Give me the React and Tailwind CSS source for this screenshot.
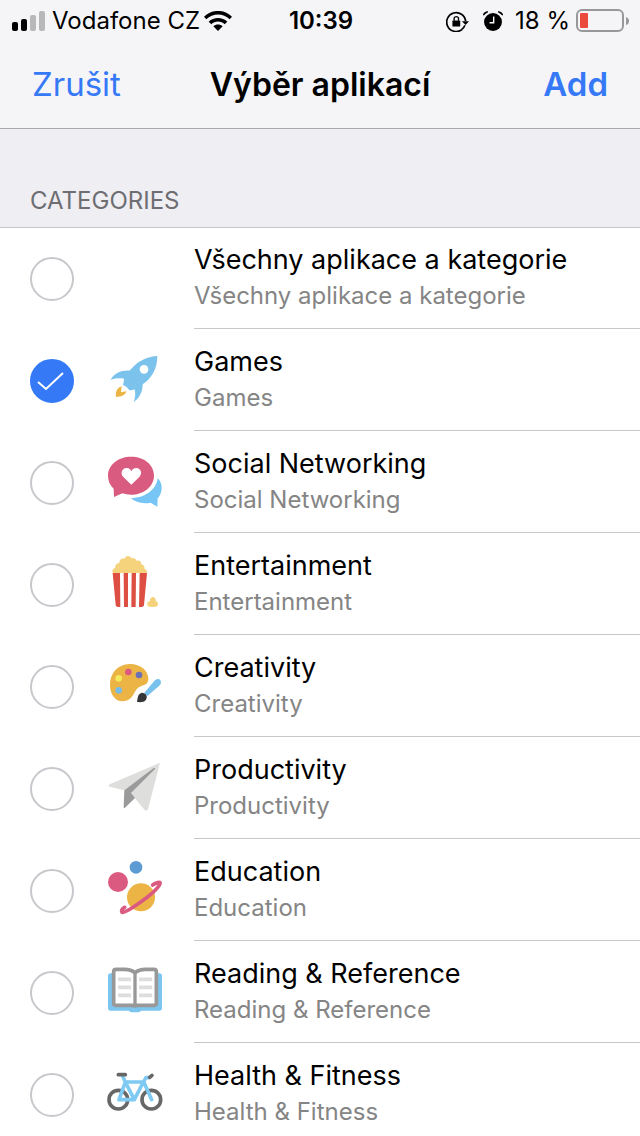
import React, { useState } from 'react';

function RocketIcon() {
  return (
    <svg viewBox="315 33 180 180" className="size-full" aria-hidden="true">
      <path fill="#7bc3ec" d="M472 48 C446 49 419 61 402 78 L388 92 C365 90 344 99 332 119 C345 115 359 114 372 116 C372 123 370 130 369 135 C378 139 384 144 388 151 C394 151 400 150 404 148 C407 160 406 173 401 186 C417 176 428 157 428 133 C455 115 472 86 472 48 Z" />
      <circle cx="432" cy="88" r="13" fill="#fff" />
      <path fill="#ecb443" d="M365 139 C351 144 346 155 348 171 C364 171 376 166 379 154 L363 157 Z" />
    </svg>
  );
}

function SocialIcon() {
  return (
    <svg viewBox="45 39 180 180" className="size-full" aria-hidden="true">
      <path fill="#76c5f5" d="M203 115 C214 125 217 140 214 153 C212 164 207 171 203 175 L202 200 L182 188 C158 193 136 187 123 175 C162 174 199 151 203 115 Z" />
      <path fill="#d95b80" d="M123 50 C163 50 192 74 192 107 C192 140 160 164 123 164 C114 164 105 162 97 160 L72 171 L71 146 C60 136 54 122 54 107 C54 74 85 50 123 50 Z" />
      <path fill="#fff" d="M124 134 L100 111 C88 98 99 83 110 84 C118 84 122 89 124 94 C126 89 131 84 139 84 C150 84 160 98 148 111 Z" />
    </svg>
  );
}

function PopcornIcon() {
  return (
    <svg viewBox="45 30 180 180" className="size-full" aria-hidden="true">
      <path fill="#f5d37c" d="M69 84 C65 76 69 70 76 69 C74 60 81 54 88 55 C87 44 96 38 104 41 C107 31 120 31 124 40 C132 37 137 41 139 47 C149 44 155 50 154 58 C162 61 165 66 163 71 C169 72 172 78 170 84 Z" />
      <path fill="#fff" d="M69 84 H170 L160 185 H80 Z" />
      <path fill="#dc4f42" d="M68 84 H90 L91 186 H84 C80 186 78 184 77 180 Z M101 84 H114 V186 H102 Z M125 84 H138 L137 186 H124 Z M149 84 H171 L162 180 C161 184 159 186 155 186 H147 Z" />
      <path fill="#f5d37c" d="M174 183 C169 176 173 169 180 168 C178 153 199 152 197 167 C204 170 206 177 202 183 C195 187 180 187 174 183 Z" />
    </svg>
  );
}

function PaletteIcon() {
  return (
    <svg viewBox="45 21 180 180" className="size-full" aria-hidden="true">
      <path fill="#ebb445" d="M118 42 C150 41 175 61 175 87 C175 99 168 104 156 107 C146 110 141 115 134 127 C126 143 116 154 98 154 C75 154 60 132 60 104 C60 68 84 43 118 42 Z" />
      <circle cx="115" cy="66" r="10" fill="#dc5980" />
      <circle cx="147" cy="75" r="10" fill="#6a70b4" />
      <circle cx="86" cy="85" r="10" fill="#f5ea5b" />
      <circle cx="86" cy="121" r="10" fill="#76bde8" />
      <path fill="#76c1ee" d="M163 128 L193 93 C199 86 207 85 211 91 C215 97 213 104 207 108 L172 138 Z" />
      <path fill="#34373a" d="M141 156 C143 143 144 130 156 128 C168 128 174 139 168 149 C163 157 152 157 141 156 Z" />
    </svg>
  );
}

function PlaneIcon() {
  return (
    <svg viewBox="45 27 180 180" className="size-full" aria-hidden="true">
      <path fill="#dededd" d="M210 38 L59 103 C55 105 55 109 59 110 L103 121 L193 54 L122 129 L164 180 C168 184 172 182 174 178 Z" />
      <path fill="#9b9b9b" d="M103 121 L190 55 C194 52 197 55 194 58 L123 129 L135 144 L105 173 C103 175 101 174 101 171 Z" />
    </svg>
  );
}

function PlanetsIcon() {
  return (
    <svg viewBox="45 33 180 180" className="size-full" aria-hidden="true">
      <circle cx="138" cy="52" r="19" fill="#5d9bd3" />
      <circle cx="84" cy="96" r="30" fill="#db5b80" />
      <circle cx="153" cy="142" r="42" fill="#ecb445" />
      <path fill="none" stroke="#db5b80" strokeWidth="11" strokeLinecap="round" strokeLinejoin="round" d="M188 105 C197 98 213 94 210 101 C206 114 176 140 149 158 C123 176 99 191 96 187 C92 182 96 177 104 172" />
    </svg>
  );
}

function BookIcon() {
  return (
    <svg viewBox="45 24 180 180" className="size-full" aria-hidden="true">
      <path fill="#7cc5ef" d="M62 55 H208 Q216 55 216 63 V159 Q216 167 208 167 H153 Q150 172 144 172 H126 Q120 172 117 167 H62 Q54 167 54 159 V63 Q54 55 62 55 Z" />
      <path fill="#fff" stroke="#989898" strokeWidth="11" strokeLinejoin="round" d="M71 50 Q71 43 79 43 H104 Q123 43 135 53 Q147 43 166 43 H191 Q199 43 199 50 V145 Q199 151 193 151 H77 Q71 151 71 145 Z" />
      <path stroke="#989898" strokeWidth="10" d="M135 50 V158" />
      <path stroke="#dedede" strokeWidth="11" d="M84 73 H123 M84 97 H123 M84 121 H123 M147 73 H187 M147 97 H187 M147 121 H187" />
    </svg>
  );
}

function BikeIcon() {
  return (
    <svg viewBox="45 15 180 180" className="size-full" aria-hidden="true">
      <g fill="none" strokeLinecap="round" strokeLinejoin="round">
        <circle cx="85" cy="119" r="28" stroke="#676767" strokeWidth="11" />
        <circle cx="184" cy="119" r="28" stroke="#676767" strokeWidth="11" />
        <path stroke="#7fcaf3" strokeWidth="11" d="M98 49 L106 66 L133 119 H87 L106 66 H160 L133 119 M185 119 L161 65 L168 53 H176" />
        <path stroke="#676767" strokeWidth="11" d="M85 44 H106 M179 52 L186 46" />
      </g>
    </svg>
  );
}

const categories = [
  { id: 'all', name: 'Všechny aplikace a kategorie', Icon: null },
  { id: 'games', name: 'Games', Icon: RocketIcon },
  { id: 'social', name: 'Social Networking', Icon: SocialIcon },
  { id: 'entertainment', name: 'Entertainment', Icon: PopcornIcon },
  { id: 'creativity', name: 'Creativity', Icon: PaletteIcon },
  { id: 'productivity', name: 'Productivity', Icon: PlaneIcon },
  { id: 'education', name: 'Education', Icon: PlanetsIcon },
  { id: 'reading', name: 'Reading & Reference', Icon: BookIcon },
  { id: 'health', name: 'Health & Fitness', Icon: BikeIcon },
];

function StatusBar() {
  return (
    <div className="flex h-[42px] items-center pl-3 pr-2.5 text-2xl">
      <div className="flex flex-1 items-center whitespace-nowrap">
        <svg viewBox="0 0 34 20" className="mr-1.5 h-5 w-[34px] shrink-0" aria-hidden="true">
          <rect x="0" y="11" width="6" height="9" rx="2" />
          <rect x="9" y="8" width="6" height="12" rx="2" />
          <rect x="18" y="4" width="6" height="16" rx="2" fill="#b8b8ba" />
          <rect x="27" y="0" width="6" height="20" rx="2" fill="#b8b8ba" />
        </svg>
        Vodafone CZ
        <svg viewBox="0 0 84 60" className="ml-1 h-5 w-7 shrink-0" aria-hidden="true">
          <path d="M0 17 C23 -6 61 -6 84 17 L77 25 C58 6 26 6 7 25 Z" />
          <path d="M14 32 C29 17 55 17 70 32 L62 40 C51 29 33 29 22 40 Z" />
          <path d="M28 46 C36 39 48 39 56 46 L42 60 Z" />
        </svg>
      </div>
      <div className="font-semibold">10:39</div>
      <div className="flex flex-1 items-center justify-end whitespace-nowrap">
        <svg viewBox="0 0 68 62" className="mr-3.5 h-[21px] w-[23px] shrink-0" aria-hidden="true">
          <path fill="none" stroke="#000" strokeWidth="5" d="M47 55 A28 28 0 1 1 58 30" />
          <path d="M47 30 H68 L58 41 Z" />
          <path fill="none" stroke="#000" strokeWidth="4" d="M24 29 V21 A7 7 0 0 1 37 21 V29" />
          <rect x="19" y="28" width="23" height="18" rx="2" />
          <path fill="none" stroke="#000" strokeWidth="5" d="M56 42 A28 28 0 0 1 46 55" />
        </svg>
        <svg viewBox="0 0 58 58" className="mr-3 size-5 shrink-0" aria-hidden="true">
          <circle cx="29" cy="32" r="26" />
          <path d="M1 12 Q3 3 14 2 Q6 6 1 12 Z M57 12 Q55 3 44 2 Q52 6 57 12 Z" stroke="#000" strokeWidth="3" />
          <path fill="none" stroke="#fff" strokeWidth="4" d="M31 16 V34 H19" />
        </svg>
        18 %
        <svg viewBox="0 0 54 24" className="ml-1.5 h-6 w-[54px] shrink-0" aria-hidden="true">
          <rect x="1" y="1" width="46" height="21" rx="5" fill="none" stroke="#98989b" strokeWidth="2" />
          <rect x="4" y="4" width="8" height="15" rx="1" fill="#eb4b3d" />
          <path fill="#98989b" d="M50 8 Q53 9 53 12 Q53 15 50 16 Z" />
        </svg>
      </div>
    </div>
  );
}

function CategoryRow({ category, checked, onToggle }) {
  const { name, Icon } = category;
  return (
    <li className="first:shadow-[inset_0_1px_0_#c8c7cc]">
      <label className="flex h-[102px] items-stretch pl-[30px]">
        <span className="grid shrink-0 place-items-center pt-0.5">
          <input
            type="checkbox"
            checked={checked}
            onChange={onToggle}
            aria-label={name}
            className="peer col-start-1 row-start-1 size-11 appearance-none rounded-full border-2 border-[#c7c7cc] checked:border-[#3579f6] checked:bg-[#3579f6]"
          />
          <svg viewBox="0 0 44 44" className="pointer-events-none invisible col-start-1 row-start-1 size-11 peer-checked:visible" aria-hidden="true">
            <path fill="none" stroke="#fff" strokeWidth="2" d="M8 23 L16 30 L33 14" />
          </svg>
        </span>
        <span className="ml-[31px] mr-[29px] mt-[22px] size-[60px] shrink-0">{Icon && <Icon />}</span>
        <span className="flex min-w-0 flex-1 flex-col border-b border-[#c8c7cc] pt-[15px]">
          <span className="truncate text-[27px] leading-9 text-black">{name}</span>
          <span className="truncate text-2xl leading-9 text-[#858585]">{name}</span>
        </span>
      </label>
    </li>
  );
}

export default function App() {
  const [selected, setSelected] = useState(['games']);

  const toggle = (id) => {
    setSelected((prev) => (prev.includes(id) ? prev.filter((x) => x !== id) : [...prev, id]));
  };

  return (
    <div className="flex h-screen flex-col bg-white font-['Inter',sans-serif] text-black">
      <header className="shrink-0 border-b border-[#a9a9ad] bg-[#f5f5f8]">
        <StatusBar />
        <nav className="grid h-[86px] grid-cols-[1fr_auto_1fr] items-center px-8 text-[33px]">
          <button type="button" className="justify-self-start text-[#3579f6]">Zrušit</button>
          <h1 className="text-[32px] font-semibold">Výběr aplikací</h1>
          <button type="button" className="justify-self-end font-semibold text-[#3579f6]">Add</button>
        </nav>
      </header>

      <main className="flex-1 overflow-y-auto [scrollbar-width:none]">
        <h2 className="bg-[#efeef3] px-[30px] pb-2.5 pt-14 text-2xl leading-8 text-[#6d6d72]">CATEGORIES</h2>
        <ul>
          {categories.map((category) => (
            <CategoryRow
              key={category.id}
              category={category}
              checked={selected.includes(category.id)}
              onToggle={() => toggle(category.id)}
            />
          ))}
        </ul>
      </main>
    </div>
  );
}
